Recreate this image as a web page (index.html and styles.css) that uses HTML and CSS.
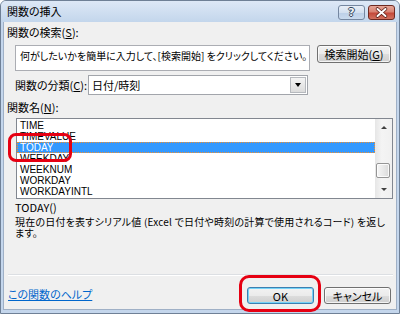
FILE: index.html
```html
<!DOCTYPE html>
<html lang="ja">
<head>
<meta charset="utf-8">
<title>関数の挿入</title>
<link rel="stylesheet" href="styles.css">
</head>
<body>
<div class="window">
  <div class="titlebar">
    <span class="title">関数の挿入</span>
    <div class="caption-buttons">
      <span class="cap-btn cap-help">?</span>
      <span class="cap-btn cap-close">
        <svg width="25" height="13" viewBox="0 0 25 13">
          <path d="M8.5 3 L16.5 10 M16.5 3 L8.5 10" stroke="#5b1e17" stroke-width="3.6" stroke-linecap="round"/>
          <path d="M8.5 3 L16.5 10 M16.5 3 L8.5 10" stroke="#ffffff" stroke-width="2" stroke-linecap="round"/>
        </svg>
      </span>
    </div>
  </div>
  <div class="client">
    <div class="label">関数の検索(<u>S</u>):</div>
    <div class="search-row">
      <div class="textbox">何がしたいかを簡単に入力して、[検索開始] をクリックしてください。</div>
      <div class="btn search-btn">検索開始(<u>G</u>)</div>
    </div>
    <div class="category-row">
      <span class="label cat-label">関数の分類(<u>C</u>):</span>
      <div class="combo">
        <span class="combo-text">日付/時刻</span>
        <span class="combo-btn"><span class="tri-down"></span></span>
      </div>
    </div>
    <div class="label names-label">関数名(<u>N</u>):</div>
    <div class="listbox">
      <ul class="items">
        <li>TIME</li>
        <li>TIMEVALUE</li>
        <li class="sel">TODAY</li>
        <li>WEEKDAY</li>
        <li>WEEKNUM</li>
        <li>WORKDAY</li>
        <li>WORKDAYINTL</li>
      </ul>
      <div class="scrollbar">
        <div class="sb-btn"><span class="sb-up"></span></div>
        <div class="sb-track"><div class="sb-thumb"></div></div>
        <div class="sb-btn"><span class="sb-down"></span></div>
      </div>
    </div>
    <div class="syntax">TODAY()</div>
    <div class="desc">現在の日付を表すシリアル値 (Excel で日付や時刻の計算で使用されるコード) を返し<br>ます。</div>
    <div class="separator"></div>
    <div class="footer">
      <a class="help-link">この関数のヘルプ</a>
      <div class="btn ok">OK</div>
      <div class="btn cancel">キャンセル</div>
    </div>
  </div>
  <div class="mark mark-today"></div>
  <div class="mark mark-ok"></div>
</div>
</body>
</html>
```
FILE: styles.css
```css
* { box-sizing: border-box; }
html, body { margin: 0; padding: 0; }
body {
  font-family: "Noto Sans CJK JP", "Liberation Sans", sans-serif;
  font-size: 11px;
  font-feature-settings: "palt";
  color: #000;
  background: #fff;
}
u { text-decoration: underline; text-underline-offset: 1px; }

.window {
  position: relative;
  width: 400px;
  height: 314px;
  display: flex;
  flex-direction: column;
  border: 1px solid #6f8096;
  border-radius: 6px 6px 0 0;
  background: #c4d6ec;
  padding: 0 2px 3px;
}

.titlebar {
  height: 21px;
  margin: 0 -2px;
  display: flex;
  align-items: flex-start;
  justify-content: space-between;
  padding: 0 4px 0 6px;
  background: linear-gradient(#dde8f6, #c3d6ec);
  border-radius: 5px 5px 0 0;
}
.title { line-height: 21px; }
.caption-buttons { display: flex; gap: 3px; margin-top: 4px; }
.cap-btn {
  width: 27px;
  height: 15px;
  border-radius: 3px;
  display: flex;
  align-items: center;
  justify-content: center;
}
.cap-help {
  border: 1px solid #7587a0;
  background: linear-gradient(#e8eff8 0%, #d3e0f0 50%, #bccfe7 51%, #c9daee 100%);
  color: #eef2f7;
  font-family: "DejaVu Sans", sans-serif;
  font-weight: bold;
  font-size: 11px;
  line-height: 13px;
  text-shadow: 1px 0 0 #34465c, -1px 0 0 #34465c, 0 1px 0 #34465c, 0 -1px 0 #34465c;
}
.cap-close {
  border: 1px solid #6e2a22;
  background: linear-gradient(#e6a597 0%, #d88373 45%, #c4493a 55%, #d2725f 100%);
}

.client {
  flex: 1;
  background: #f0f0f0;
  border: 1px solid #9fb0c6;
  border-top: none;
  display: flex;
  flex-direction: column;
  padding: 4px 3px 5px 3px;
}

.label { line-height: 12px; }

.search-row {
  display: flex;
  margin: 7px 2px 0 8px;
  gap: 7px;
}
.textbox {
  width: 295px;
  height: 26px;
  border: 1px solid #abadb3;
  background: #fff;
  padding: 4px 4px;
  font-size: 10px;
  line-height: 12px;
  white-space: nowrap;
  overflow: hidden;
}

.btn {
  border: 1px solid #707070;
  border-radius: 3px;
  background: linear-gradient(#f2f2f2 0%, #ebebeb 50%, #dddddd 51%, #cfcfcf 100%);
  box-shadow: inset 0 0 0 1px rgba(255, 255, 255, 0.75);
  display: flex;
  align-items: center;
  justify-content: center;
  line-height: 12px;
}
.search-btn { width: 74px; height: 18px; }

.category-row {
  display: flex;
  align-items: center;
  height: 20px;
  margin: 4px 0 0 8px;
}
.cat-label { width: 73px; }
.combo {
  width: 220px;
  height: 20px;
  border: 1px solid #a2a5ab;
  background: #fff;
  padding: 1px;
  display: flex;
  align-items: center;
}
.combo-text { padding-left: 2px; line-height: 12px; }
.combo-btn {
  margin-left: auto;
  width: 16px;
  height: 16px;
  border: 1px solid #b6b9be;
  background: linear-gradient(#f4f4f4, #dcdcdc);
  display: flex;
  align-items: center;
  justify-content: center;
}
.tri-down {
  width: 0;
  height: 0;
  border-left: 3px solid transparent;
  border-right: 3px solid transparent;
  border-top: 4px solid #000;
}

.names-label { margin-top: 6px; }

.listbox {
  margin: 5px 0 0 9px;
  height: 81px;
  border: 1px solid #828790;
  background: #fff;
  display: flex;
}
.items {
  list-style: none;
  margin: 0;
  padding: 1px 0 0;
  flex: 1;
  font-family: "Liberation Sans", sans-serif;
  font-feature-settings: normal;
  font-size: 10px;
}
.items li {
  height: 11px;
  line-height: 11px;
  padding-left: 3px;
}
.items li.sel {
  background: #3399ff;
  color: #fff;
  outline: 1px dotted #f09030;
  outline-offset: -1px;
}

.scrollbar {
  width: 17px;
  display: flex;
  flex-direction: column;
  background: linear-gradient(to right, #e6e6e6, #f4f4f4 40%, #f0f0f0);
}
.sb-btn {
  height: 17px;
  display: flex;
  align-items: center;
  justify-content: center;
}
.sb-up, .sb-down {
  width: 0;
  height: 0;
  border-left: 3px solid transparent;
  border-right: 3px solid transparent;
}
.sb-up { border-bottom: 3px solid #404040; }
.sb-down { border-top: 3px solid #404040; }
.sb-track { flex: 1; }
.sb-thumb {
  margin: 27px 0 0 1px;
  width: 14px;
  height: 15px;
  border: 1px solid #959595;
  border-radius: 2px;
  background: linear-gradient(to right, #f6f6f6, #e9e9e9 50%, #dadada);
  box-shadow: inset 0 0 0 1px rgba(255, 255, 255, 0.8);
}

.syntax {
  margin: 2px 0 0 8px;
  line-height: 12px;
}
.desc {
  margin: 3px 0 0 8px;
  font-size: 10px;
  letter-spacing: 0.2px;
  line-height: 11px;
  white-space: nowrap;
}

.separator {
  margin: auto 0 0 1px;
  height: 2px;
  border-top: 1px solid #dcdfe3;
  border-bottom: 1px solid #ffffff;
}

.footer {
  display: flex;
  align-items: center;
  height: 17px;
  margin: 11px 2px 0 1px;
}
.help-link {
  margin-right: auto;
  align-self: flex-start;
  margin-top: 1px;
  line-height: 12px;
  color: #0066cc;
  text-decoration: underline;
}
.footer .btn { width: 67px; height: 17px; }
.ok {
  border-color: #3c7fb1;
  box-shadow: inset 0 0 0 1px #74d3f8;
}
.cancel { margin-left: 10px; }

.mark {
  position: absolute;
  border: 3px solid #e60012;
  border-radius: 8px;
  pointer-events: none;
}
.mark-today { left: 7px; top: 132px; width: 64px; height: 29px; }
.mark-ok { left: 238px; top: 274px; width: 82px; height: 37px; border-radius: 10px; }
```
